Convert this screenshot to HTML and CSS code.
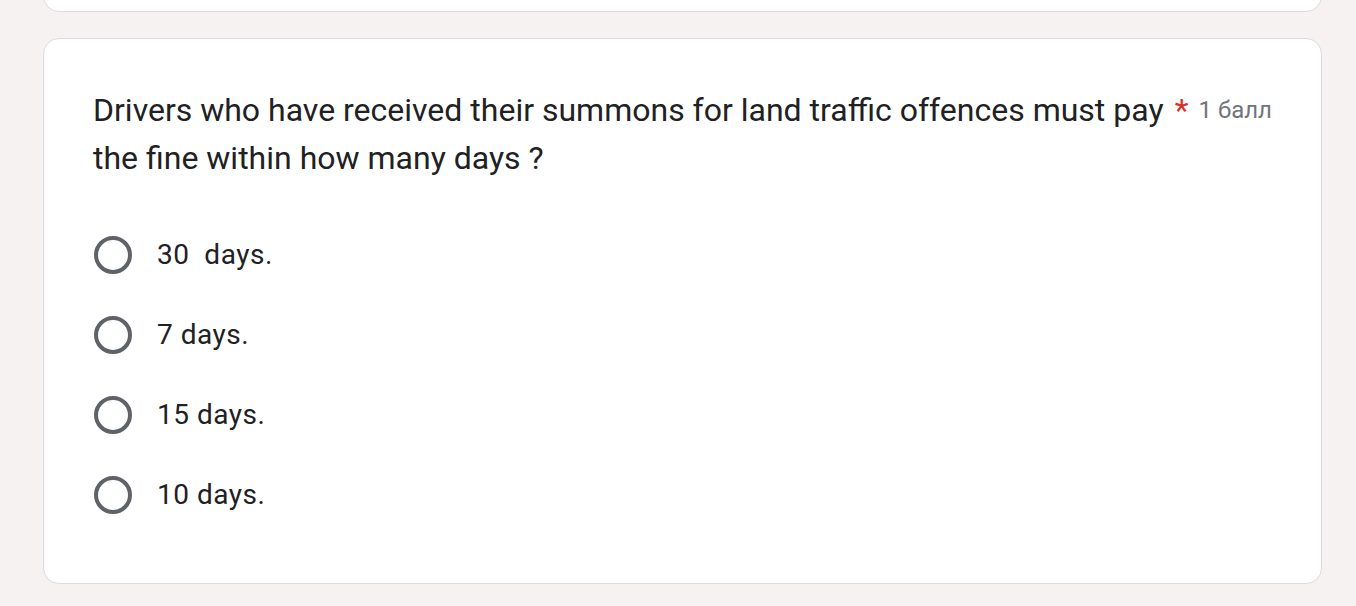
FILE: index.html
```html
<!DOCTYPE html>
<html lang="en">
<head>
    <meta charset="UTF-8">
    <meta name="viewport" content="width=device-width, initial-scale=1.0">
    <title>Quiz question</title>
    <link rel="stylesheet" href="styles.css">
</head>
<body>
    <div class="card card-prev"></div>

    <div class="card question">
        <div class="question-head">
            <div class="question-title">Drivers who have received their summons for land traffic offences must pay the fine within how many days ?</div>
            <span class="required">*</span>
            <span class="points">1 балл</span>
        </div>

        <div class="options">
            <label class="option">
                <span class="radio"></span>
                <span class="option-text">30&nbsp; days.</span>
            </label>
            <label class="option">
                <span class="radio"></span>
                <span class="option-text">7 days.</span>
            </label>
            <label class="option">
                <span class="radio"></span>
                <span class="option-text">15 days.</span>
            </label>
            <label class="option">
                <span class="radio"></span>
                <span class="option-text">10 days.</span>
            </label>
        </div>
    </div>
</body>
</html>
```

FILE: styles.css
```css
body {
    font-family: Roboto, "Noto Sans", Arial, sans-serif;
    margin: 0;
    padding: 0 34px 0 43px;
    background-color: #f5f2f1;
    color: #202124;
}
.card {
    background-color: #fff;
    border: 1px solid #dadce0;
    border-radius: 16px;
    box-sizing: border-box;
}
.card-prev {
    height: 50px;
    margin-top: -38px;
}
.question {
    margin-top: 26px;
    padding: 47px 49px 63px 49px;
    height: 546px;
}
.question-head {
    display: flex;
    align-items: flex-start;
}
.question-title {
    flex: 1;
    font-size: 32px;
    line-height: 48px;
    letter-spacing: 0;
}
.required {
    color: #d93025;
    font-size: 32px;
    line-height: 48px;
    margin-left: 5px;
}
.points {
    font-size: 24px;
    line-height: 48px;
    color: #70757a;
    white-space: nowrap;
    margin-left: 10px;
}
.options {
    display: flex;
    flex-direction: column;
    gap: 32px;
    margin-top: 49px;
}
.option {
    display: flex;
    align-items: center;
    height: 48px;
    cursor: pointer;
}
.radio {
    width: 38px;
    height: 38px;
    box-sizing: border-box;
    border: 4px solid #5f6368;
    border-radius: 50%;
    margin-left: 1px;
    flex-shrink: 0;
}
.option-text {
    margin-left: 25px;
    font-size: 28px;
    line-height: 48px;
    letter-spacing: 0.5px;
}
```
